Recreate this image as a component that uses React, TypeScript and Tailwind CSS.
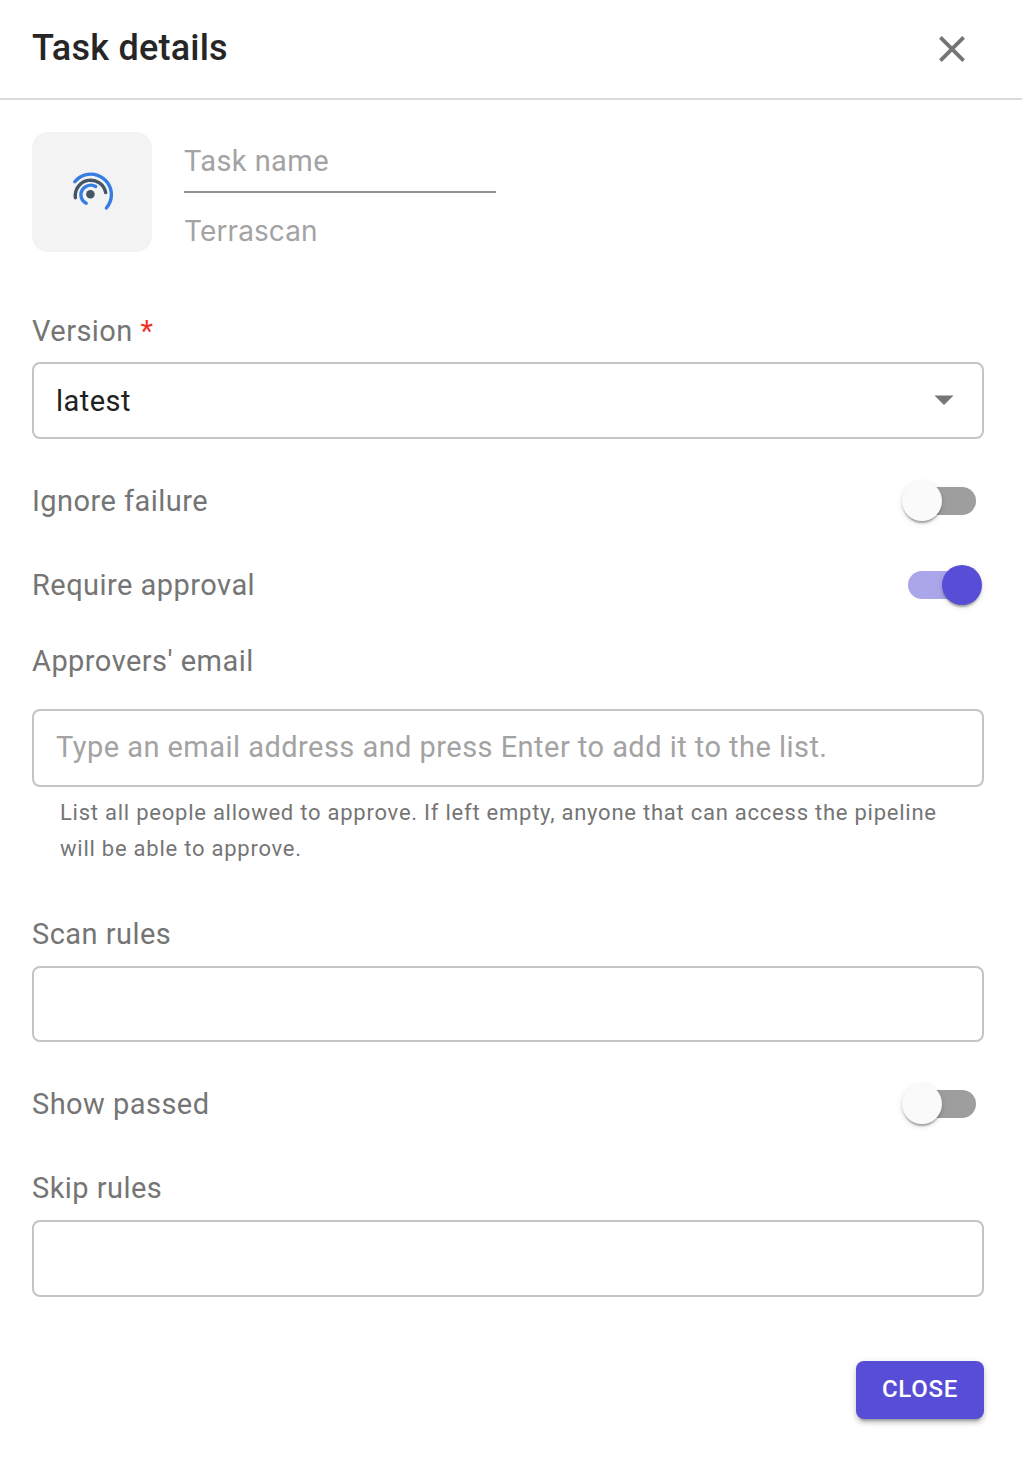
import React from "react";

function Toggle({ on = false }: { on?: boolean }) {
  return (
    <span className="relative block h-7 w-[68px]">
      <span className={on ? "block h-full rounded-full bg-[#aba5ea]" : "block h-full rounded-full bg-[#9e9e9e]"} />
      <span
        className={
          on
            ? "absolute -top-1.5 left-[34px] size-10 rounded-full bg-[#574dd6] shadow-[0_4px_2px_-2px_rgba(0,0,0,0.2),0_2px_2px_0_rgba(0,0,0,0.14),0_2px_6px_0_rgba(0,0,0,0.12)]"
            : "absolute -top-1.5 -left-1.5 size-10 rounded-full bg-[#fafafa] shadow-[0_4px_2px_-2px_rgba(0,0,0,0.2),0_2px_2px_0_rgba(0,0,0,0.14),0_2px_6px_0_rgba(0,0,0,0.12)]"
        }
      />
    </span>
  );
}

function SwitchRow({ label, on }: { label: string; on?: boolean }) {
  return (
    <div className="flex h-10 items-center justify-between pr-2">
      <span>{label}</span>
      <Toggle on={on} />
    </div>
  );
}

function TerrascanLogo() {
  return (
    <svg className="size-16" viewBox="0 0 64 64" fill="none" strokeWidth="3.4" strokeLinecap="round">
      <path d="M14.8 21.8A20.6 20.6 0 0 1 51.4 34.6A20.6 20.6 0 0 1 46.4 48" stroke="#357de3" />
      <path d="M15.4 37.7A15.37 15.37 0 0 1 45.7 32.6" stroke="#455566" />
      <path d="M35.7 26.5A9.9 9.9 0 0 0 20.9 34.8A9.9 9.9 0 0 0 26.2 43.3" stroke="#357de3" />
      <circle cx="30.4" cy="34.2" r="4.3" fill="#455566" />
    </svg>
  );
}

const box = "flex w-full items-center rounded-lg border-2 border-[#c4c4c4] px-[22px]";

export default function App() {
  return (
    <div className="h-[1472px] w-[1022px] bg-white font-['Roboto',sans-serif] text-[29px] leading-10 tracking-[0.46px] text-[#757575]">
      <header className="flex h-[100px] items-center justify-between border-b-2 border-[#dadada] pr-[56px] pl-8">
        <h1 className="pb-0.5 text-[36px] font-medium tracking-[0.23px] text-[#262626]">Task details</h1>
        <svg className="size-7" viewBox="0 0 28 28" fill="none" stroke="#757575" strokeWidth="3.8">
          <path d="M2.4 2.4 25.6 25.6M25.6 2.4 2.4 25.6" />
        </svg>
      </header>
      <main className="pr-[38px] pl-8">
        <section className="flex h-[152px] gap-8 pt-8 text-[#a3a3a3]">
          <div className="flex size-[120px] items-center justify-center rounded-2xl bg-[#f3f3f3]">
            <TerrascanLogo />
          </div>
          <div>
            <div className="h-[61px] w-[312px] border-b-2 border-[#919191] pt-[9px]">Task name</div>
            <div className="pt-[18px] font-['Inter',sans-serif] text-[28px] tracking-[0.1px]">Terrascan</div>
          </div>
        </section>
        <div className="mt-[59px]">
          Version <span className="text-[#f03224]">*</span>
        </div>
        <div className={`${box} mt-[11px] h-[77px] justify-between text-[#212121]`}>
          latest
          <svg className="mr-1.5 mb-0.5 h-[10px] w-5" viewBox="0 0 20 10">
            <path d="M.5 0.5h19L10 10z" fill="#757575" />
          </svg>
        </div>
        <div className="mt-[42px]">
          <SwitchRow label="Ignore failure" />
        </div>
        <div className="mt-11">
          <SwitchRow label="Require approval" on />
        </div>
        <div className="mt-9">Approvers' email</div>
        <div className={`${box} mt-[28px] h-[78px] pb-0.5 text-[#a3a3a3]`}>
          Type an email address and press Enter to add it to the list.
        </div>
        <p className="mt-2 px-7 text-[22px] leading-9 tracking-[0.76px]">
          List all people allowed to approve. If left empty, anyone that can access the pipeline will be able to approve.
        </p>
        <div className="mt-[47px]">Scan rules</div>
        <div className={`${box} mt-3 h-[76px]`} />
        <div className="mt-[42px]">
          <SwitchRow label="Show passed" />
        </div>
        <div className="mt-11">Skip rules</div>
        <div className={`${box} mt-3 h-[77px]`} />
        <div className="mt-16 flex justify-end">
          <button className="h-[58px] w-32 rounded-lg bg-[#574dd6] pb-0.5 text-[24px] font-medium tracking-[0.7px] text-white shadow-[0_6px_2px_-4px_rgba(0,0,0,0.2),0_4px_4px_0_rgba(0,0,0,0.14),0_2px_10px_0_rgba(0,0,0,0.12)]">
            CLOSE
          </button>
        </div>
      </main>
    </div>
  );
}
